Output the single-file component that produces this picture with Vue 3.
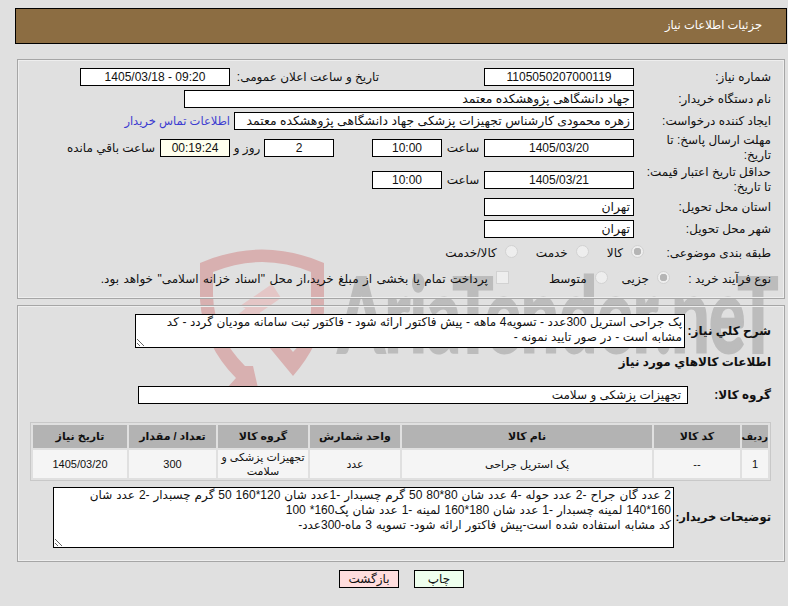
<script setup>
const desc = 'پک جراحی استریل 300عدد - تسویه4 ماهه - پیش فاکتور ارائه شود - فاکتور ثبت سامانه مودیان گردد - کد\nمشابه است - در صور تایید نمونه -'
const notes = '2 عدد گان جراح -2 عدد حوله -4 عدد شان 80*80 50 گرم چسبدار -1عدد شان 120*160 50 گرم چسبدار -2 عدد شان\n160*140 لمینه چسبدار -1 عدد شان 180*160 لمینه -1 عدد شان پک160* 100\nکد مشابه استفاده شده است-پیش فاکتور ارائه شود- تسویه 3 ماه-300عدد-'
const heads = ['ردیف', 'کد کالا', 'نام کالا', 'واحد شمارش', 'گروه کالا', 'تعداد / مقدار', 'تاریخ نیاز']
const cells = ['1', '--', 'پک استریل جراحی', 'عدد', 'تجهیزات پزشکی و سلامت', '300', '1405/03/20']
const widths = [26, 86, 250, 90, 90, 87, 94]
</script>

<template>
  <div class="page" dir="rtl">
    <svg class="mark" width="788" height="606" viewBox="0 0 788 606" aria-hidden="true">
      <path class="logo" d="M200 263 Q262 236 324 263 V312 Q320 345 293 376 L255 330 L268 322 L293 352 Q310 335 311 310 V272 Q262 252 213 272 V295 Q214 335 245 366 L253 366 L258 388 L227 388 L236 378 Q203 345 200 300 Z" />
      <path class="logo soft" d="M236 316 L255 301 L266 328 L246 338 Z M240 306 L272 284 L281 298 L258 314 Z" />
      <text class="mark-text" x="338" y="352" textLength="440" lengthAdjust="spacingAndGlyphs">AriaTender.neT</text>
    </svg>

    <header class="bar">جزئیات اطلاعات نیاز</header>

    <section class="panel first">
      <div class="row">
        <label class="lab">شماره نیاز:</label>
        <div class="box w150 center">1105050207000119</div>
        <label class="lab announce">تاریخ و ساعت اعلان عمومی:</label>
        <div class="box w150 center">09:20 - 1405/03/18</div>
      </div>
      <div class="row">
        <label class="lab">نام دستگاه خریدار:</label>
        <div class="box w450">جهاد دانشگاهی پژوهشکده معتمد</div>
      </div>
      <div class="row">
        <label class="lab">ایجاد کننده درخواست:</label>
        <div class="box w400">زهره محمودی کارشناس تجهیزات پزشکی جهاد دانشگاهی پژوهشکده معتمد</div>
        <a class="contact">اطلاعات تماس خریدار</a>
      </div>
      <div class="row tall">
        <label class="lab">مهلت ارسال پاسخ: تا تاریخ:</label>
        <div class="box w150 center">1405/03/20</div>
        <span class="unit hour">ساعت</span>
        <div class="box w70 center">10:00</div>
        <div class="box w70 center days">2</div>
        <span class="unit day">روز و</span>
        <div class="box w70 center timer">00:19:24</div>
        <span class="unit left">ساعت باقي مانده</span>
      </div>
      <div class="row tall">
        <label class="lab">حداقل تاریخ اعتبار قیمت: تا تاریخ:</label>
        <div class="box w150 center">1405/03/21</div>
        <span class="unit hour">ساعت</span>
        <div class="box w70 center">10:00</div>
      </div>
      <div class="row">
        <label class="lab">استان محل تحویل:</label>
        <div class="box w150">تهران</div>
      </div>
      <div class="row">
        <label class="lab">شهر محل تحویل:</label>
        <div class="box w150">تهران</div>
      </div>
      <div class="row choices">
        <label class="lab narrow">طبقه بندی موضوعی:</label>
        <span class="opt"><input type="radio" disabled checked />کالا</span>
        <span class="opt"><input type="radio" disabled />خدمت</span>
        <span class="opt"><input type="radio" disabled />کالا/خدمت</span>
      </div>
      <div class="row choices">
        <label class="lab narrower">نوع فرآیند خرید :</label>
        <span class="opt tight"><input type="radio" disabled checked />جزیی</span>
        <span class="opt wide"><input type="radio" disabled />متوسط</span>
        <span class="opt spaced"><input type="checkbox" disabled />پرداخت تمام یا بخشی از مبلغ خرید،از محل "اسناد خزانه اسلامی" خواهد بود.</span>
      </div>
    </section>

    <section class="panel second">
      <div class="block summary">
        <label class="lab strong">شرح کلي نیاز:</label>
        <textarea class="area short" readonly :value="desc"></textarea>
      </div>
      <h2 class="subhead">اطلاعات کالاهاي مورد نیاز</h2>
      <div class="block group">
        <label class="lab strong">گروه کالا:</label>
        <div class="box w550">تجهیزات پزشکی و سلامت</div>
      </div>
      <table class="items">
        <thead>
          <tr><th v-for="(h, i) in heads" :key="h" :style="{ width: widths[i] + 'px' }">{{ h }}</th></tr>
        </thead>
        <tbody>
          <tr><td v-for="c in cells" :key="c">{{ c }}</td></tr>
        </tbody>
      </table>
      <div class="block notes">
        <label class="lab strong">توضیحات خریدار:</label>
        <textarea class="area long" readonly :value="notes"></textarea>
      </div>
    </section>

    <footer class="actions">
      <button class="btn print">چاپ</button>
      <button class="btn back">بازگشت</button>
    </footer>
  </div>
</template>

<style>
html, body { margin: 0; background: #e0e0e0; }
</style>

<style scoped>
.page {
  position: relative;
  width: 788px;
  height: 606px;
  overflow: hidden;
  box-sizing: border-box;
  padding-top: 8px;
  background: #e0e0e0;
  color: #111;
  font: 12px/15px "Liberation Sans", "DejaVu Sans", sans-serif;
}
.mark { position: absolute; left: 0; top: 0; direction: ltr; }
.logo { fill: #d8b0b0; }
.logo.soft { fill: #e4c6c6; }
.mark-text { font: bold 104px Lato, sans-serif; fill: #bcbcbc; stroke: #bcbcbc; stroke-width: 3px; direction: ltr; text-anchor: start; }
.bar, .panel, .actions { position: relative; }
.bar {
  box-sizing: border-box;
  width: 772px;
  height: 36px;
  margin-right: 1px;
  border: 1px solid #000;
  background: #8c6d42;
  color: #fff;
  font-size: 11.5px;
  line-height: 33px;
  padding-right: 24px;
}
.panel {
  box-sizing: border-box;
  width: 768px;
  margin-right: 3px;
  border: 1px solid #a6a6a6;
  box-shadow: inset 0 0 0 1px #eee;
}
.first {
  height: 240px;
  margin-top: 15px;
  padding: 8px 13px 0 0;
  display: flex;
  flex-direction: column;
  gap: 4px;
}
.second { height: 257px; margin-top: 6px; }
.row { display: flex; align-items: center; height: 18px; }
.row.tall { height: 28px; }
.row.choices { height: 22px; }
.lab { width: 130px; margin-left: 7px; flex: none; }
.lab.announce { width: 149px; margin: 0 105px 0 0; }
.lab.narrow { width: 120px; }
.lab.narrower { width: 94px; }
.lab.strong { font-weight: bold; white-space: nowrap; }
.box {
  box-sizing: border-box;
  height: 18px;
  flex: none;
  border: 1px solid #000;
  background: #fff;
  padding: 0 3px;
  line-height: 17px;
  white-space: nowrap;
  overflow: hidden;
}
.box:not(.center) { font-size: 12.4px; }
.center { text-align: center; }
.w70 { width: 70px; }
.w150 { width: 150px; }
.w400 { width: 400px; }
.w450 { width: 450px; }
.w550 { width: 550px; padding: 0 6px; font-size: 12px !important; }
.days { margin-right: 38px; }
.timer { background: #ffffee; }
.unit.hour { width: 42px; text-align: center; }
.unit.day { width: 34px; text-align: center; }
.unit.left { margin-right: 5px; }
.contact { color: #3c3cd0; margin-right: 4px; font-size: 11.5px; white-space: nowrap; }
.opt { display: flex; align-items: center; gap: 8px; margin-left: 18px; white-space: nowrap; }
.opt.tight { margin-left: 14px; }
.opt.wide { margin-left: 40px; }
.opt.spaced { word-spacing: 1.1px; }
.opt input {
  appearance: none;
  box-sizing: border-box;
  width: 13px;
  height: 13px;
  margin: -4px 0 0;
  border: 1px solid #d2d2d2;
  background: #eee;
}
.opt input[type="radio"] { border-radius: 50%; }
.opt input:checked { background: radial-gradient(circle, #b5b5b5 0 3.5px, #eee 4px); }
.block { display: flex; padding-right: 13px; }
.block .lab { margin-left: 0; }
.summary { margin-top: 8px; align-items: center; }
.summary .lab { width: 86px; }
.area {
  box-sizing: border-box;
  display: block;
  width: 550px;
  margin: 0;
  padding: 0 2px;
  border: 1px solid #000;
  border-radius: 0;
  background: #fff;
  color: #111;
  font: inherit;
  overflow: hidden;
  outline: none;
}
.area.short { height: 34px; word-spacing: 0.2px; }
.area.long { width: 621px; height: 61px; word-spacing: 0.6px; }
.subhead { margin: 7px 13px 0 0; font-size: 12px; line-height: 15px; font-weight: bold; }
.group { margin-top: 16px; align-items: center; }
.group .lab { width: 83px; }
.items {
  margin: 18px 13px 0 0;
  width: 741px;
  table-layout: fixed;
  border-collapse: separate;
  border-spacing: 2px;
  border: 1px solid #c8c8c8;
}
.items th { height: 23px; padding: 0; background: #b3b3b3; font-size: 11px; font-weight: bold; text-align: center; white-space: nowrap; }
.items th:first-child { font-size: 10px; }
.items td { height: 28px; padding: 0; background: #f5f5f5; font-size: 11px; text-align: center; line-height: 14px; }
.notes { margin-top: 6px; align-items: center; }
.notes .lab { width: 97px; font-size: 11.5px; }
.actions { display: flex; justify-content: center; gap: 15px; margin-top: 8px; padding-left: 15px; }
.btn {
  box-sizing: border-box;
  height: 18px;
  padding: 0;
  border: 1px solid #000;
  border-radius: 0;
  color: #111;
  font: inherit;
  line-height: 16px;
}
.print { width: 50px; background: #eeffee; }
.back { width: 60px; background: #ffdddd; }
</style>
